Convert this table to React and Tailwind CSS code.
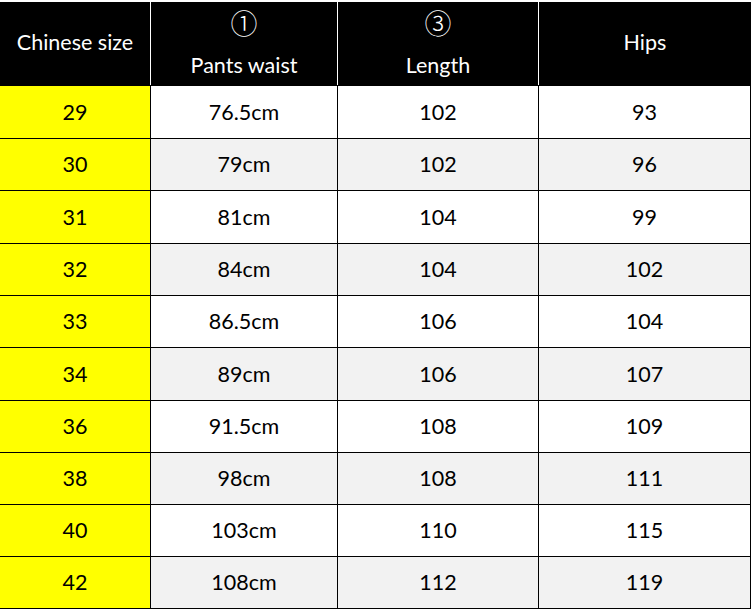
import React from 'react';

const rows = [
  { size: '29', waist: '76.5cm', length: '102', hips: '93', h: 'h-[53px]' },
  { size: '30', waist: '79cm', length: '102', hips: '96', h: 'h-[52px]' },
  { size: '31', waist: '81cm', length: '104', hips: '99', h: 'h-[53px]' },
  { size: '32', waist: '84cm', length: '104', hips: '102', h: 'h-[52px]' },
  { size: '33', waist: '86.5cm', length: '106', hips: '104', h: 'h-[52px]' },
  { size: '34', waist: '89cm', length: '106', hips: '107', h: 'h-[53px]' },
  { size: '36', waist: '91.5cm', length: '108', hips: '109', h: 'h-[52px]' },
  { size: '38', waist: '98cm', length: '108', hips: '111', h: 'h-[52px]' },
  { size: '40', waist: '103cm', length: '110', hips: '115', h: 'h-[52px]' },
  { size: '42', waist: '108cm', length: '112', hips: '119', h: 'h-[53px]' },
];

const cols = 'grid grid-cols-[151px_187px_201px_212px]';

const App = () => {
  return (
    <div className="w-[752px] h-[610px] bg-white pt-[2px] font-['Lato','Open_Sans',sans-serif] text-[21.5px] text-black">
      <div className="w-[751px]">
        {/* Header */}
        <div className={`${cols} h-[83px] bg-black text-white`}>
          <div className="flex items-center justify-center border-r border-white pb-[2px]">Chinese size</div>
          <div className="flex flex-col items-center border-r border-white">
            <span className="mt-[4px] text-[27px] leading-[34px] font-['Noto_Sans_CJK_JP',sans-serif] font-light">①</span>
            <span className="mt-[11px] leading-[28px]">Pants waist</span>
          </div>
          <div className="flex flex-col items-center border-r border-white">
            <span className="mt-[4px] text-[27px] leading-[34px] font-['Noto_Sans_CJK_JP',sans-serif] font-light">③</span>
            <span className="mt-[11px] leading-[28px]">Length</span>
          </div>
          <div className="flex items-center justify-center pb-[2px]">Hips</div>
        </div>

        {/* Body */}
        {rows.map((r, i) => (
          <div
            key={r.size}
            className={`${cols} ${r.h} border-t border-black ${i % 2 === 1 ? 'bg-[#f2f2f2]' : 'bg-white'} ${i === rows.length - 1 ? 'border-b' : ''}`}
          >
            <div className="flex items-center justify-center bg-[#ffff00] border-r border-black">{r.size}</div>
            <div className="flex items-center justify-center border-r border-black">{r.waist}</div>
            <div className="flex items-center justify-center border-r border-black">{r.length}</div>
            <div className="flex items-center justify-center border-r border-black">{r.hips}</div>
          </div>
        ))}
      </div>
    </div>
  );
};

export default App;
